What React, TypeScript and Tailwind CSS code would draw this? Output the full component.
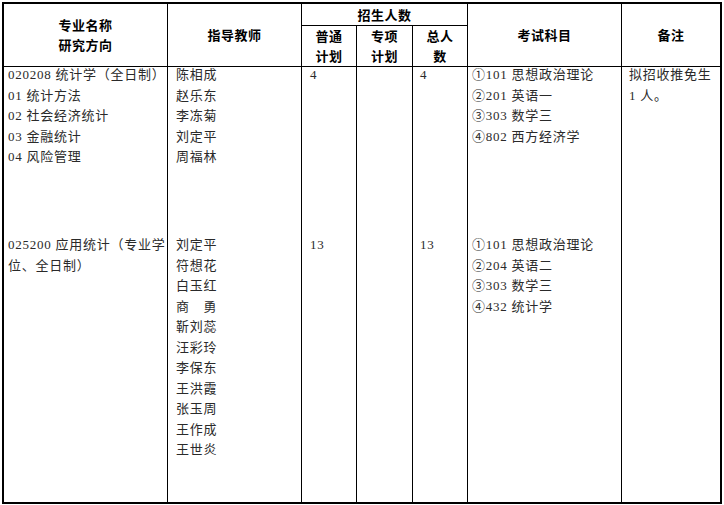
import React from "react";

const body = "font-['Liberation_Serif','Noto_Sans_CJK_SC',serif] text-[13px] tracking-[0.75px] leading-[20.5px] text-[#2a2a2a]";
const head = "font-['Noto_Sans_CJK_SC',sans-serif] font-bold text-[13px] tracking-[0.5px] leading-[20px] text-black flex flex-col items-center justify-center text-center";

function Cell({ lines, pl }: { lines: string[]; pl: string }) {
  return (
    <div className={`-mt-[2px] ${pl}`}>
      {lines.map((l, i) => (
        <div key={i} className="whitespace-pre">{l}</div>
      ))}
    </div>
  );
}

function BodyCol({ a, b, pl, last }: { a: string[]; b: string[]; pl: string; last?: boolean }) {
  return (
    <div className={`row-start-3 flex flex-col ${last ? "" : "border-r border-black"} ${body}`}>
      <div className="h-[170px] shrink-0">
        <Cell lines={a} pl={pl} />
      </div>
      <div>
        <Cell lines={b} pl={pl} />
      </div>
    </div>
  );
}

export default function App() {
  return (
    <div className="bg-white w-[724px] h-[505px] pt-[2px] pl-[2px]">
      <div className="w-[720px] border-2 border-black grid grid-cols-[164px_134px_55px_56px_55px_154px_98px] grid-rows-[22px_41px_435px]">
        <div className={`row-span-2 col-start-1 row-start-1 border-r border-b border-black ${head}`}>
          <div>专业名称</div>
          <div>研究方向</div>
        </div>
        <div className={`row-span-2 col-start-2 row-start-1 border-r border-b border-black ${head}`}>
          <div>指导教师</div>
        </div>
        <div className={`col-start-3 col-span-3 row-start-1 border-r border-b border-black ${head}`}>
          <div>招生人数</div>
        </div>
        <div className={`col-start-3 row-start-2 border-r border-b border-black ${head}`}>
          <div>普通</div>
          <div>计划</div>
        </div>
        <div className={`col-start-4 row-start-2 border-r border-b border-black ${head}`}>
          <div>专项</div>
          <div>计划</div>
        </div>
        <div className={`col-start-5 row-start-2 border-r border-b border-black ${head}`}>
          <div>总人</div>
          <div>数</div>
        </div>
        <div className={`row-span-2 col-start-6 row-start-1 border-r border-b border-black ${head}`}>
          <div>考试科目</div>
        </div>
        <div className={`row-span-2 col-start-7 row-start-1 border-b border-black ${head}`}>
          <div>备注</div>
        </div>

        <BodyCol
          pl="pl-[4px]"
          a={["020208 统计学（全日制）", "01 统计方法", "02 社会经济统计", "03 金融统计", "04 风险管理"]}
          b={["025200 应用统计（专业学", "位、全日制）"]}
        />
        <BodyCol
          pl="pl-[8px]"
          a={["陈相成", "赵乐东", "李冻菊", "刘定平", "周福林"]}
          b={["刘定平", "符想花", "白玉红", "商　勇", "靳刘蕊", "汪彩玲", "李保东", "王洪霞", "张玉周", "王作成", "王世炎"]}
        />
        <BodyCol pl="pl-[8px]" a={["4"]} b={["13"]} />
        <BodyCol pl="pl-[8px]" a={[]} b={[]} />
        <BodyCol pl="pl-[7px]" a={["4"]} b={["13"]} />
        <BodyCol
          pl="pl-[4px]"
          a={["①101 思想政治理论", "②201 英语一", "③303 数学三", "④802 西方经济学"]}
          b={["①101 思想政治理论", "②204 英语二", "③303 数学三", "④432 统计学"]}
        />
        <BodyCol pl="pl-[7px]" a={["拟招收推免生", "1 人。"]} b={[]} last />
      </div>
    </div>
  );
}
